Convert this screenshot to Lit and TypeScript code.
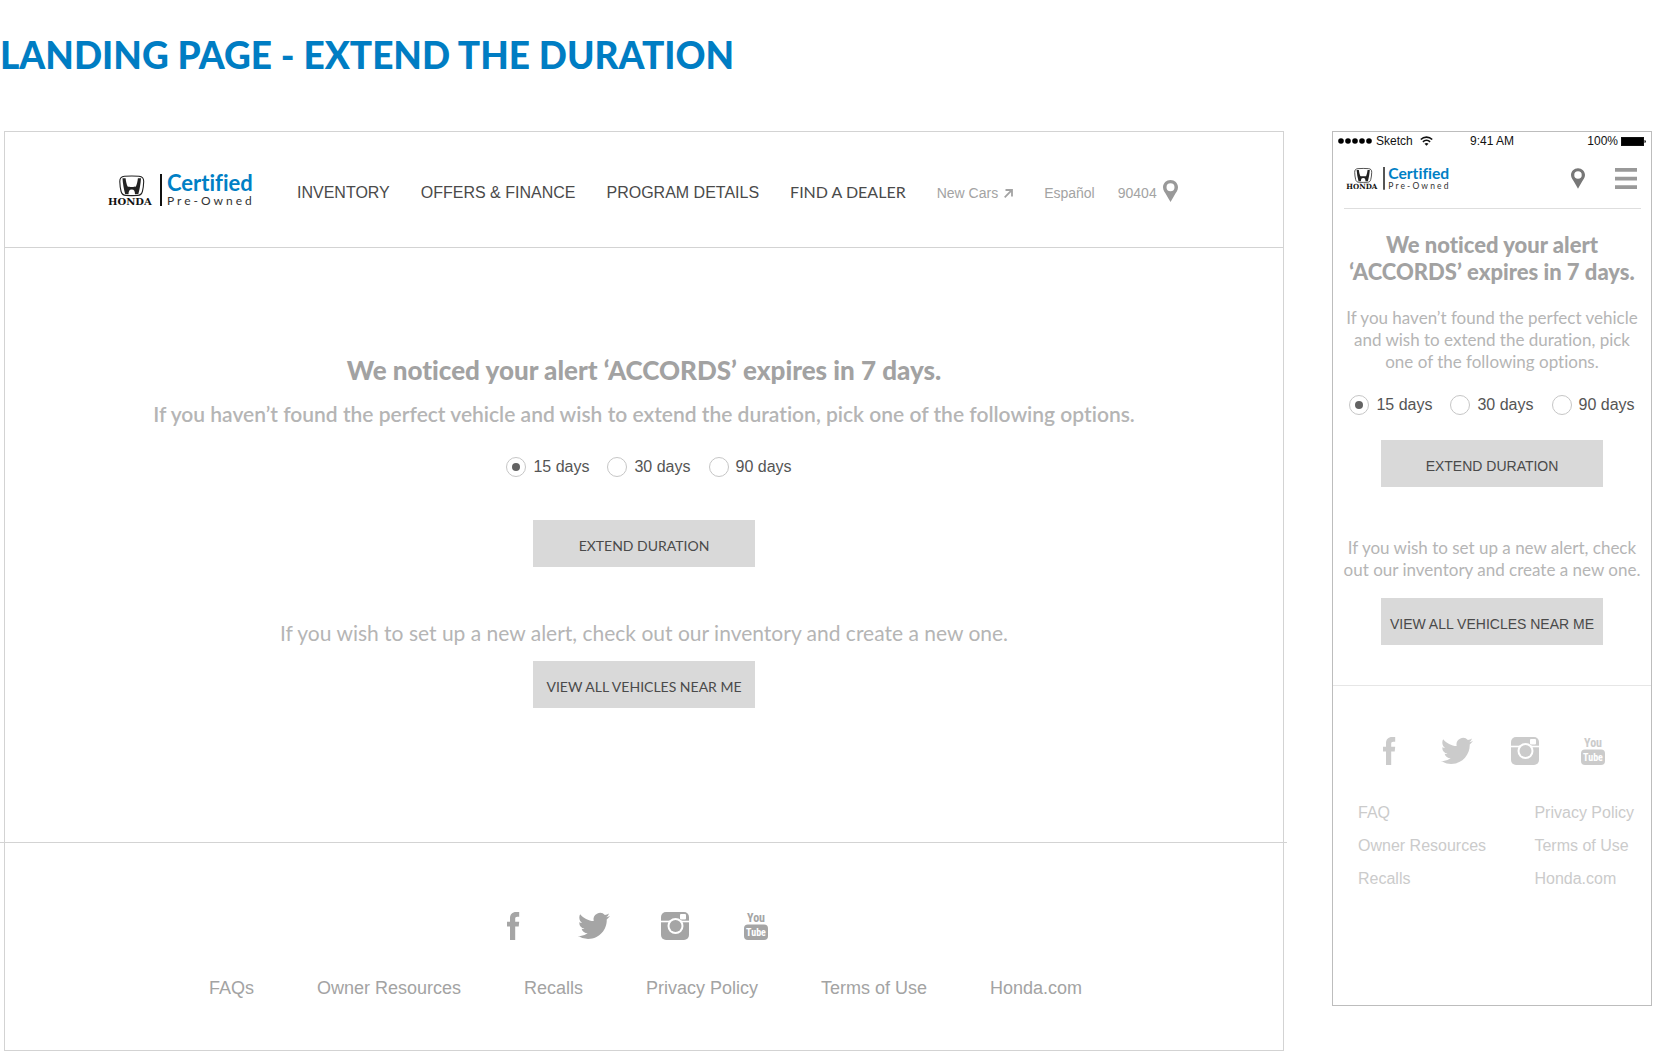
import { LitElement, html, svg, css } from "lit";
import { customElement, property } from "lit/decorators.js";

const durations = ["15 days", "30 days", "90 days"];

const shared = css`
  * {
    box-sizing: border-box;
  }
  h1,
  h2,
  p,
  ul {
    margin: 0;
    padding: 0;
  }
  ul {
    list-style: none;
  }
  a {
    color: inherit;
    text-decoration: none;
  }
  svg {
    display: block;
  }
`;

const pin = svg`<path fill-rule="evenodd" d="M7.500 0C3.300 0 0 3.200 0 7.300C0 10.500 2 12.400 3.700 15.400C5 17.700 6.500 20 7.500 22C8.500 20 10 17.700 11.300 15.400C13 12.400 15 10.500 15 7.300C15 3.200 11.700 0 7.500 0ZM7.500 3.300A4 4 0 1 1 7.500 11.300A4 4 0 1 1 7.500 3.300Z"/>`;

@customElement("brand-logo")
export class BrandLogo extends LitElement {
  static styles = css`
    :host {
      display: block;
    }
    svg {
      display: block;
      width: 100%;
      height: auto;
      overflow: visible;
    }
    .maker {
      font: 700 10px "DejaVu Serif", serif;
      fill: #111;
    }
    .certified {
      font: 700 22px Lato, sans-serif;
      font-variant-ligatures: none;
      fill: #0080c5;
    }
    .owned {
      font: 400 12px Lato, sans-serif;
      letter-spacing: 3px;
      fill: #333;
    }
  `;

  render() {
    return html`
      <svg viewBox="0 0 149 32" role="img" aria-label="Honda Certified Pre-Owned">
        <path
          fill="#fff"
          stroke="#222"
          stroke-width="1.100"
          d="M15.500 2.300C20 1.900 25.500 1.900 30 2.300C33.500 2.600 34.800 4.200 34.700 7.500C34.600 11 34.200 14.500 33.400 17.500C32.700 20.300 31.500 21.300 28.500 21.500C25 21.700 20.500 21.700 17 21.500C14 21.300 12.800 20.300 12.100 17.500C11.300 14.500 10.900 11 10.800 7.500C10.700 4.200 12 2.600 15.500 2.300Z"
        />
        <path
          fill="#222"
          d="M13.500 4.200H16.600C17 7.500 17.600 10.300 18.600 12.500C20 13.100 25.500 13.100 26.900 12.500C27.900 10.300 28.500 7.500 28.900 4.200H32C31.700 9.500 30.700 15 29.300 20.200H26C25.900 17 25.300 15.400 22.750 15.400S19.600 17 19.500 20.200H16.200C14.800 15 13.800 9.500 13.500 4.200Z"
        />
        <text class="maker" x="-1" y="31">HONDA</text>
        <rect x="51" y="0" width="2" height="32" fill="#111" />
        <text class="certified" x="58" y="17">Certified</text>
        <text class="owned" x="58" y="31">Pre-Owned</text>
      </svg>
    `;
  }
}

@customElement("social-links")
export class SocialLinks extends LitElement {
  static styles = [
    shared,
    css`
      :host {
        display: block;
      }
      ul {
        display: flex;
        justify-content: center;
        gap: var(--social-gap, 49px);
      }
      svg {
        width: 32px;
        height: 28px;
        fill: currentColor;
        overflow: visible;
      }
      .knock {
        fill: #fff;
      }
      .you,
      .tube {
        font: 700 12px "Liberation Sans Narrow", "Roboto Condensed", "Liberation Sans", sans-serif;
        text-anchor: middle;
      }
      .tube {
        font-size: 10px;
      }
    `,
  ];

  render() {
    return html`
      <ul>
        <li>
          <a href="#facebook" aria-label="Facebook">
            <svg viewBox="0 0 32 28">
              <path d="M13 28V14.500H10V9.800H13V6.500C13 2.200 15.200 0 19.200 0H22.200V4.700H20.300C18.700 4.700 18.200 5.400 18.200 6.800V9.800H22.200L21.700 14.500H18.200V28Z" />
            </svg>
          </a>
        </li>
        <li>
          <a href="#twitter" aria-label="Twitter">
            <svg viewBox="0 2 24 20" preserveAspectRatio="xMidYMid meet">
              <path d="M23.953 4.570a10 10 0 01-2.825.775 4.958 4.958 0 002.163-2.723c-.951.555-2.005.959-3.127 1.184a4.920 4.920 0 00-8.384 4.482C7.690 8.095 4.067 6.130 1.640 3.162a4.822 4.822 0 00-.666 2.475c0 1.710.87 3.213 2.188 4.096a4.904 4.904 0 01-2.228-.616v.06a4.923 4.923 0 003.946 4.827 4.996 4.996 0 01-2.212.085 4.936 4.936 0 004.604 3.417 9.867 9.867 0 01-6.102 2.105c-.39 0-.779-.023-1.170-.067a13.995 13.995 0 007.557 2.209c9.053 0 13.998-7.496 13.998-13.985 0-.21 0-.42-.015-.63A9.935 9.935 0 0024 4.590z" />
            </svg>
          </a>
        </li>
        <li>
          <a href="#instagram" aria-label="Instagram">
            <svg viewBox="0 0 32 28">
              <rect x="2" width="28" height="28" rx="5" />
              <rect class="knock" x="2" y="8.700" width="28" height="1.600" />
              <circle class="knock" cx="16.500" cy="14" r="8" />
              <circle cx="16.500" cy="14" r="6" />
              <rect class="knock" x="21" y="2" width="6" height="5.500" rx="1" />
            </svg>
          </a>
        </li>
        <li>
          <a href="#youtube" aria-label="YouTube">
            <svg viewBox="0 0 32 28">
              <rect x="4" y="12.500" width="24" height="15.500" rx="4" />
              <text class="you" x="16" y="10">You</text>
              <text class="tube knock" x="16" y="24">Tube</text>
            </svg>
          </a>
        </li>
      </ul>
    `;
  }
}

@customElement("duration-picker")
export class DurationPicker extends LitElement {
  @property() name = "duration";

  static styles = [
    shared,
    css`
      :host {
        display: block;
      }
      fieldset {
        display: flex;
        justify-content: center;
        gap: 18px;
        margin: 0;
        padding: 0;
        border: 0;
      }
      label {
        display: flex;
        align-items: center;
        gap: 7px;
        font: 400 16px/20px "Liberation Sans", sans-serif;
        color: #555;
      }
      input {
        display: grid;
        place-items: center;
        appearance: none;
        width: 20px;
        height: 20px;
        margin: 0;
        border: 1px solid #c6c6c6;
        border-radius: 50%;
        background: #fff;
      }
      input:checked::before {
        content: "";
        width: 8px;
        height: 8px;
        border-radius: 50%;
        background: #636363;
      }
    `,
  ];

  render() {
    return html`
      <fieldset aria-label="Extend by">
        ${durations.map(
          (d, i) => html`<label><input type="radio" name=${this.name} value=${d} ?checked=${i === 0} />${d}</label>`
        )}
      </fieldset>
    `;
  }
}

const panel = css`
  :host {
    display: block;
    border: 1px solid #d3d3d3;
    background: #fff;
    text-align: center;
    font-family: Lato, sans-serif;
    font-variant-ligatures: none;
    color: #b5b5b5;
  }
  main {
    display: flex;
    flex-direction: column;
    align-items: center;
  }
  h2 {
    color: #a2a2a2;
    font-weight: 900;
  }
  button {
    width: 222px;
    height: 47px;
    padding: 5px 0 0;
    border: 0;
    background: #d9d9d9;
    color: #4a4a4a;
    font: 400 14px/20px Lato, sans-serif;
  }
`;

@customElement("desktop-page")
export class DesktopPage extends LitElement {
  static styles = [
    shared,
    panel,
    css`
      header {
        display: flex;
        align-items: center;
        gap: 39px;
        height: 116px;
        padding-left: 104px;
        border-bottom: 1px solid #d3d3d3;
      }
      .logo {
        flex: none;
        width: 149px;
      }
      nav {
        display: flex;
        align-items: baseline;
        gap: 31px;
        padding-top: 6px;
        font: 400 16px/20px "Liberation Sans", sans-serif;
        color: #4a4a4a;
        white-space: nowrap;
      }
      .find {
        font-family: Lato, sans-serif;
      }
      .minor {
        display: flex;
        align-items: baseline;
        gap: 6px;
        font-size: 14px;
        color: #a3a3a3;
      }
      .arrow {
        width: 9px;
        height: 9px;
        margin-bottom: 3px;
      }
      .place {
        display: flex;
        align-items: baseline;
        gap: 23px;
      }
      .zip {
        align-items: center;
      }
      .pin {
        width: 15px;
        height: 22px;
        margin-bottom: 4px;
        fill: #999;
      }
      main {
        padding: 106px 0 134px;
      }
      h2 {
        font-size: 26px;
        line-height: 32px;
      }
      p {
        font-size: 21px;
        line-height: 28px;
      }
      .ask {
        margin: 14px 0 29px;
        font-weight: 600;
      }
      .again {
        margin: 52px 0 14px;
      }
      duration-picker {
        margin: 0 0 43px 10px;
      }
      footer {
        margin: 0 -4px 0 -5px;
        padding: 69px 0 50px;
        border-top: 1px solid #d3d3d3;
      }
      social-links {
        padding-right: 18px;
        color: #a5a5a5;
      }
      .links {
        display: flex;
        justify-content: center;
        gap: 63px;
        margin-top: 36px;
        padding-left: 4px;
        font: 400 18px/24px "Liberation Sans", sans-serif;
        color: #a3a3a3;
      }
    `,
  ];

  render() {
    const links = ["FAQs", "Owner Resources", "Recalls", "Privacy Policy", "Terms of Use", "Honda.com"];
    return html`
      <header>
        <a class="logo" href="#home"><brand-logo></brand-logo></a>
        <nav>
          <a href="#inventory">INVENTORY</a>
          <a href="#offers">OFFERS &amp; FINANCE</a>
          <a href="#program">PROGRAM DETAILS</a>
          <a class="find" href="#dealer">FIND A DEALER</a>
          <a class="minor" href="#new">
            New Cars
            <svg class="arrow" viewBox="0 0 9 9" fill="none" stroke="currentColor" stroke-width="1.800">
              <path d="M.7 8.300L7.800 1.200M1.500 1H8V7.500" />
            </svg>
          </a>
          <span class="place">
            <a class="minor" href="#es" lang="es">Español</a>
            <a class="minor zip" href="#zip">90404<svg class="pin" viewBox="0 0 15 22">${pin}</svg></a>
          </span>
        </nav>
      </header>
      <main>
        <h2>We noticed your alert ‘ACCORDS’ expires in 7 days.</h2>
        <p class="ask">
          If you haven’t found the perfect vehicle and wish to extend the duration, pick one of the following options.
        </p>
        <duration-picker name="desktop-duration"></duration-picker>
        <button type="button">EXTEND DURATION</button>
        <p class="again">If you wish to set up a new alert, check out our inventory and create a new one.</p>
        <button type="button">VIEW ALL VEHICLES NEAR ME</button>
      </main>
      <footer>
        <social-links></social-links>
        <ul class="links">
          ${links.map((l) => html`<li><a href="#">${l}</a></li>`)}
        </ul>
      </footer>
    `;
  }
}

@customElement("mobile-page")
export class MobilePage extends LitElement {
  static styles = [
    shared,
    panel,
    css`
      :host {
        border-color: #bdbdbd;
      }
      .status {
        display: grid;
        grid-template-columns: 1fr auto 1fr;
        align-items: center;
        padding: 1px 5px 0;
        font: 400 12px/16px "Liberation Sans", sans-serif;
        color: #111;
      }
      .carrier,
      .charge {
        display: flex;
        align-items: center;
        gap: 4px;
      }
      .charge {
        justify-content: flex-end;
        gap: 3px;
      }
      .dots {
        width: 34px;
        height: 6px;
      }
      .wifi {
        width: 13px;
        height: 10px;
        margin-left: 3px;
      }
      .battery {
        width: 25px;
        height: 9px;
      }
      header {
        display: flex;
        align-items: center;
        height: 60px;
        margin: 0 10px 0 11px;
        padding: 0 4px 0 3px;
        border-bottom: 1px solid #dedede;
      }
      .logo {
        width: 106px;
        margin-right: auto;
      }
      .pin {
        width: 14px;
        height: 21px;
        margin-right: 30px;
        fill: #777;
      }
      .menu {
        width: 22px;
        height: 21px;
        padding: 0;
        background: none;
        color: #999;
      }
      main {
        padding: 22px 0 40px;
      }
      h2 {
        font-size: 22px;
        line-height: 27px;
      }
      p {
        font-size: 17px;
        line-height: 22px;
      }
      .ask {
        margin: 22px 0;
      }
      .again {
        margin: 50px 0 17px;
      }
      duration-picker {
        margin-bottom: 25px;
      }
      .action {
        font-family: "Liberation Sans", sans-serif;
      }
      footer {
        padding: 51px 17px 110px 25px;
        border-top: 1px solid #e6e6e6;
        color: #cbcbcb;
      }
      social-links {
        --social-gap: 36px;
        padding-right: 10px;
      }
      .links {
        display: grid;
        grid-template-columns: auto auto;
        grid-template-rows: repeat(3, auto);
        grid-auto-flow: column;
        justify-content: space-between;
        margin-top: 31px;
        text-align: left;
        font: 400 16px/33px "Liberation Sans", sans-serif;
      }
    `,
  ];

  render() {
    const links = ["FAQ", "Owner Resources", "Recalls", "Privacy Policy", "Terms of Use", "Honda.com"];
    return html`
      <div class="status">
        <span class="carrier">
          <svg class="dots" viewBox="0 0 34 6">
            ${[3, 10, 17, 24, 31].map((x) => svg`<circle cx=${x} cy="3" r="2.800" />`)}
          </svg>
          Sketch
          <svg class="wifi" viewBox="0 0 13 10" fill="none" stroke="currentColor" stroke-width="1.600">
            <path d="M.8 3.500C4 .3 9 .3 12.200 3.500M2.900 5.800C5 3.800 8 3.800 10.100 5.800" />
            <path d="M6.500 9.800L4.500 7.700C5.700 6.700 7.300 6.700 8.500 7.700Z" fill="currentColor" stroke="none" />
          </svg>
        </span>
        <span>9:41 AM</span>
        <span class="charge">
          100%
          <svg class="battery" viewBox="0 0 25 9">
            <rect x=".5" y=".5" width="22" height="8" stroke="#111" />
            <path d="M23.500 3C25.300 3.500 25.300 5.500 23.500 6Z" />
          </svg>
        </span>
      </div>
      <header>
        <a class="logo" href="#home"><brand-logo></brand-logo></a>
        <a href="#zip" aria-label="Find a dealer"><svg class="pin" viewBox="0 0 15 22">${pin}</svg></a>
        <button class="menu" type="button" aria-label="Menu">
          <svg viewBox="0 0 22 21" fill="currentColor">
            <path d="M0 0H22V3.700H0ZM0 8.700H22V12.400H0ZM0 17.300H22V21H0Z" />
          </svg>
        </button>
      </header>
      <main>
        <h2>We noticed your alert<br />‘ACCORDS’ expires in 7 days.</h2>
        <p class="ask">
          If you haven’t found the perfect vehicle<br />and wish to extend the duration, pick<br />one of the following
          options.
        </p>
        <duration-picker name="mobile-duration"></duration-picker>
        <button class="action" type="button">EXTEND DURATION</button>
        <p class="again">If you wish to set up a new alert, check<br />out our inventory and create a new one.</p>
        <button class="action" type="button">VIEW ALL VEHICLES NEAR ME</button>
      </main>
      <footer>
        <social-links></social-links>
        <ul class="links">
          ${links.map((l) => html`<li><a href="#">${l}</a></li>`)}
        </ul>
      </footer>
    `;
  }
}

@customElement("app-root")
export class AppRoot extends LitElement {
  static styles = [
    shared,
    css`
      :host {
        display: block;
        background: #fff;
      }
      h1 {
        padding: 33px 0 54px;
        font: 900 37px/44px Lato, sans-serif;
        color: #007dc3;
      }
      .boards {
        display: flex;
        align-items: flex-start;
        gap: 48px;
        padding: 0 1px 0 4px;
      }
      desktop-page {
        flex: 1;
      }
      mobile-page {
        flex: none;
        width: 320px;
      }
    `,
  ];

  render() {
    return html`
      <h1>LANDING PAGE - EXTEND THE DURATION</h1>
      <div class="boards">
        <desktop-page></desktop-page>
        <mobile-page></mobile-page>
      </div>
    `;
  }
}
